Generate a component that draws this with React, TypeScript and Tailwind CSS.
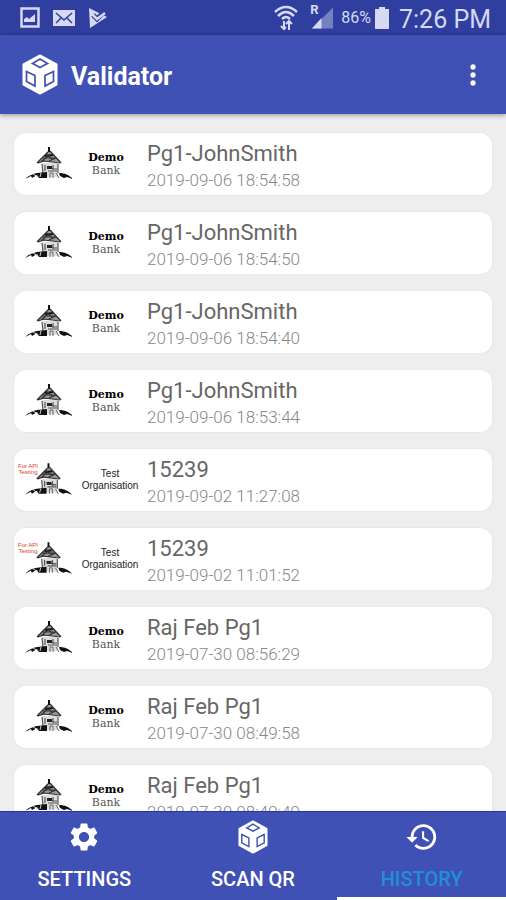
import { MdSettings, MdHistory, MdMoreVert } from "react-icons/md";

type Org = "demo" | "test";

const scans: { org: Org; name: string; date: string }[] = [
  { org: "demo", name: "Pg1-JohnSmith", date: "2019-09-06 18:54:58" },
  { org: "demo", name: "Pg1-JohnSmith", date: "2019-09-06 18:54:50" },
  { org: "demo", name: "Pg1-JohnSmith", date: "2019-09-06 18:54:40" },
  { org: "demo", name: "Pg1-JohnSmith", date: "2019-09-06 18:53:44" },
  { org: "test", name: "15239", date: "2019-09-02 11:27:08" },
  { org: "test", name: "15239", date: "2019-09-02 11:01:52" },
  { org: "demo", name: "Raj Feb Pg1", date: "2019-07-30 08:56:29" },
  { org: "demo", name: "Raj Feb Pg1", date: "2019-07-30 08:49:58" },
  { org: "demo", name: "Raj Feb Pg1", date: "2019-07-30 08:49:49" },
];

const CubeIcon = ({ className }: { className: string }) => (
  <svg viewBox="0 0 36 41" className={className}>
    <path
      d="M18 1.5 34.500 10.500V30.500L18 39.5 1.500 30.500V10.500Z"
      fill="white"
      stroke="white"
      strokeWidth="2"
      strokeLinejoin="round"
    />
    <g fill="white" stroke="#3f51b5" strokeWidth="1.700">
      <path d="M18 5 25.500 9.500 18 13.500 10.500 9.500Z" />
      <path d="M4.500 17.500 13 21.500V32L4.500 27.500Z" />
      <path d="M31.500 17.500 23 21.500V32L31.500 27.500Z" />
    </g>
  </svg>
);

const HouseLogo = () => (
  <svg viewBox="0 0 50 34" className="h-[34px] w-[50px]">
    <path d="M25 3 37 15H13Z" fill="#999" />
    <path d="M18 16H34V30H18Z" fill="#ddd" />
    <path d="M25 0V5M21 9 29 8" stroke="#111" strokeWidth="2" />
    <path
      d="M24 5 13 16M26 4 37 16M14 16 20 14 36 16M19 11H31M22 7 28 12M17 15 24 9M25 14 32 11"
      stroke="#333"
      strokeWidth="1.200"
      fill="none"
    />
    <path
      d="M18 17 19 26M34 17V26M24 21 33 22M24 24H33M21 18V24M29 18V23"
      stroke="#555"
      strokeWidth="1.200"
      fill="none"
    />
    <path d="M23 19H28V22H23Z" fill="#222" />
    <path
      d="M1 32C5 28 9 27 13 26L23 25V31H15L13 28 8 31 7 29ZM35 26C41 26 45 28 49 32L43 30 40 31 36 29Z"
      fill="#111"
    />
    <path d="M9 27 14 30M17 26 16 30" stroke="#ccc" />
    <path d="M26 31V26H29V31M32 26 35 31" stroke="#666" fill="none" />
  </svg>
);

const StatusBar = () => (
  <div className="flex h-[35px] shrink-0 items-center justify-between bg-[#303f9f] pr-[15px] pl-5 text-[#d5d9f2]">
    <div className="flex items-center gap-[13px]">
      <svg viewBox="0 0 20 21" className="h-[21px] w-5">
        <path d="M1.500 1.500H18.500V19.500H1.500Z" fill="none" stroke="currentColor" strokeWidth="2.500" />
        <path d="M4 15V12L7 10 9 12 15 7V15Z" fill="currentColor" />
      </svg>
      <svg viewBox="0 0 22 16" className="h-4 w-[22px]">
        <path d="M0 0H22V16H0Z" fill="currentColor" />
        <path d="M3 3 11 10 19 3M3 13 8 8M19 13 14 8" stroke="#303f9f" strokeWidth="1.500" fill="none" />
      </svg>
      <svg viewBox="0 0 20 20" className="h-5 w-5">
        <path d="M1 0 19 9 2 20Z" fill="currentColor" />
        <path d="M5 7 9 11 18 2" stroke="#303f9f" strokeWidth="5" fill="none" />
        <path d="M4 6 9 11 17 5" stroke="currentColor" strokeWidth="2.500" fill="none" />
      </svg>
    </div>
    <div className="flex items-center">
      <svg viewBox="0 0 24 26" className="mr-3 h-[26px] w-6" fill="none" stroke="currentColor">
        <path d="M1 7Q12-3 23 7M4 11Q12 3 20 11M8 14Q12 10 16 14" strokeWidth="2.500" />
        <path d="M10 16V24M7 21 10 24 12 22M15 25V17M12 19 15 16 18 19" strokeWidth="2" />
      </svg>
      <div className="relative mr-2 h-6 w-[23px]">
        <svg viewBox="0 0 24 24" className="size-full">
          <path d="M24 1V23H2Z" fill="#7681c3" />
          <path d="M12 12V23H2Z" fill="currentColor" />
        </svg>
        <span className="absolute -top-1 left-0 text-[13px] leading-4 font-bold">R</span>
      </div>
      <span className="mr-1 text-[16px]">86%</span>
      <svg viewBox="0 0 14 22" className="mr-[10px] h-[22px] w-[14px]" fill="currentColor">
        <path d="M4 0H10V2H14V22H0V2H4Z" />
      </svg>
      <span className="pt-1 text-[25px] leading-8">7:26 PM</span>
    </div>
  </div>
);

const OrgLogo = ({ org }: { org: Org }) => (
  <div className="relative flex w-[133px] shrink-0 items-center pl-[10px]">
    {org === "test" && (
      <span className="absolute top-0 left-1 text-center font-['Liberation_Sans'] text-[6px] leading-[6px] text-[#e03a25]">
        For API
        <br />
        Testing
      </span>
    )}
    <HouseLogo />
    {org === "demo" ? (
      <p className="w-[64px] text-center font-['DejaVu_Serif'] text-[11px] leading-[13px] text-[#555]">
        <b className="text-black">Demo</b>
        <br />
        Bank
      </p>
    ) : (
      <p className="w-[74px] shrink-0 text-center font-['Liberation_Sans'] text-[10px] leading-3 text-[#222]">
        Test
        <br />
        Organisation
      </p>
    )}
  </div>
);

export default function App() {
  return (
    <div className="flex h-screen flex-col bg-[#eeeeee] font-[Roboto,sans-serif]">
      <StatusBar />
      <header className="z-10 flex h-[79px] shrink-0 items-center bg-[#3f51b5] pr-[17px] pl-[22px] text-white shadow-[0_1px_5px_rgba(0,0,0,0.4)]">
        <CubeIcon className="h-[41px] w-9" />
        <h1 className="ml-[13px] flex-1 pt-1 text-[25px] font-bold">Validator</h1>
        <button aria-label="More options">
          <MdMoreVert className="size-8" />
        </button>
      </header>

      <main className="min-h-0 flex-1 overflow-y-auto [scrollbar-width:none]">
        <ul className="flex flex-col gap-[17px] px-[14px] py-[19px]">
          {scans.map((scan) => (
            <li
              key={scan.date}
              className="flex h-[62px] shrink-0 items-center rounded-xl bg-white shadow-[0_0_2px_rgba(0,0,0,0.08)]"
            >
              <OrgLogo org={scan.org} />
              <div className="pt-1">
                <p className="text-[22px] leading-7 text-[#666]">{scan.name}</p>
                <p className="text-[17px] leading-6 font-light text-[#888]">{scan.date}</p>
              </div>
            </li>
          ))}
        </ul>
      </main>

      <nav className="grid h-[89px] shrink-0 grid-cols-3 border-t border-[#1d38a3] bg-[#3f51b5] text-[20px] font-medium text-white">
        <button className="flex flex-col items-center pt-2">
          <MdSettings className="size-[34px]" />
          <span className="mt-[11px] leading-7">SETTINGS</span>
        </button>
        <button className="flex flex-col items-center pt-2">
          <CubeIcon className="h-[34px] w-[30px]" />
          <span className="mt-[11px] leading-7">SCAN QR</span>
        </button>
        <button className="flex flex-col items-center border-b-3 border-white pt-2">
          <MdHistory className="size-[34px]" />
          <span className="mt-[11px] leading-7 text-[#1e90d8]">HISTORY</span>
        </button>
      </nav>
    </div>
  );
}
